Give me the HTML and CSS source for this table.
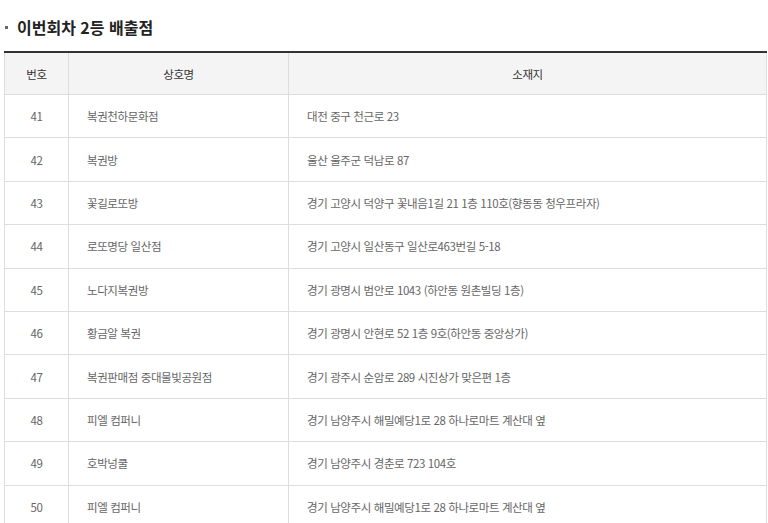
FILE: index.html
```html
<!DOCTYPE html>
<html lang="ko">
<head>
<meta charset="utf-8">
<link rel="stylesheet" href="styles.css">
</head>
<body>
<div class="wrap">
  <h3 class="title"><span class="dot"></span>이번회차 2등 배출점</h3>
  <table class="tbl">
    <colgroup>
      <col class="c1"><col class="c2"><col class="c3">
    </colgroup>
    <thead>
      <tr><th>번호</th><th>상호명</th><th>소재지</th></tr>
    </thead>
    <tbody>
      <tr><td class="num">41</td><td>복권천하문화점</td><td>대전 중구 천근로 23</td></tr>
      <tr><td class="num">42</td><td>복권방</td><td>울산 울주군 덕남로 87</td></tr>
      <tr><td class="num">43</td><td>꽃길로또방</td><td>경기 고양시 덕양구 꽃내음1길 21 1층 110호(향동동 청우프라자)</td></tr>
      <tr><td class="num">44</td><td>로또명당 일산점</td><td>경기 고양시 일산동구 일산로463번길 5-18</td></tr>
      <tr><td class="num">45</td><td>노다지복권방</td><td>경기 광명시 범안로 1043 (하안동 원촌빌딩 1층)</td></tr>
      <tr><td class="num">46</td><td>황금알 복권</td><td>경기 광명시 안현로 52 1층 9호(하안동 중앙상가)</td></tr>
      <tr><td class="num">47</td><td>복권판매점 중대물빛공원점</td><td>경기 광주시 순암로 289 시진상가 맞은편 1층</td></tr>
      <tr><td class="num">48</td><td>피엘 컴퍼니</td><td>경기 남양주시 해밀예당1로 28 하나로마트 계산대 옆</td></tr>
      <tr><td class="num">49</td><td>호박넝쿨</td><td>경기 남양주시 경춘로 723 104호</td></tr>
      <tr><td class="num">50</td><td>피엘 컴퍼니</td><td>경기 남양주시 해밀예당1로 28 하나로마트 계산대 옆</td></tr>
    </tbody>
  </table>
</div>
</body>
</html>
```

FILE: styles.css
```css
html, body {
  margin: 0;
  padding: 0;
  background: #fff;
}
body {
  font-family: "Noto Sans CJK KR", "Noto Sans", sans-serif;
  color: #333;
}
.wrap {
  padding: 16px 1px 0 4px;
}
.title {
  margin: 0 0 13px 0;
  font-size: 16px;
  line-height: 22px;
  font-weight: 700;
  color: #222;
  display: flex;
  align-items: center;
}
.dot {
  width: 3px;
  height: 3px;
  background: #666;
  margin: 0 9px 0 1px;
}
.tbl {
  width: 763px;
  border-collapse: collapse;
  table-layout: fixed;
  border-top: 2px solid #333;
  font-size: 11.5px;
  letter-spacing: -0.4px;
}
.c1 { width: 64px; }
.c2 { width: 220px; }
.c3 { width: auto; }
.tbl th {
  height: 41px;
  padding: 0;
  background: #f4f4f4;
  border: 1px solid #ddd;
  border-top: 0;
  font-weight: 400;
  color: #333;
  text-align: center;
}
.tbl td {
  height: 42.4px;
  padding: 0 0 0 18px;
  border: 1px solid #ddd;
  color: #666;
  text-align: left;
}
.tbl td.num {
  padding: 0;
  text-align: center;
}
```
